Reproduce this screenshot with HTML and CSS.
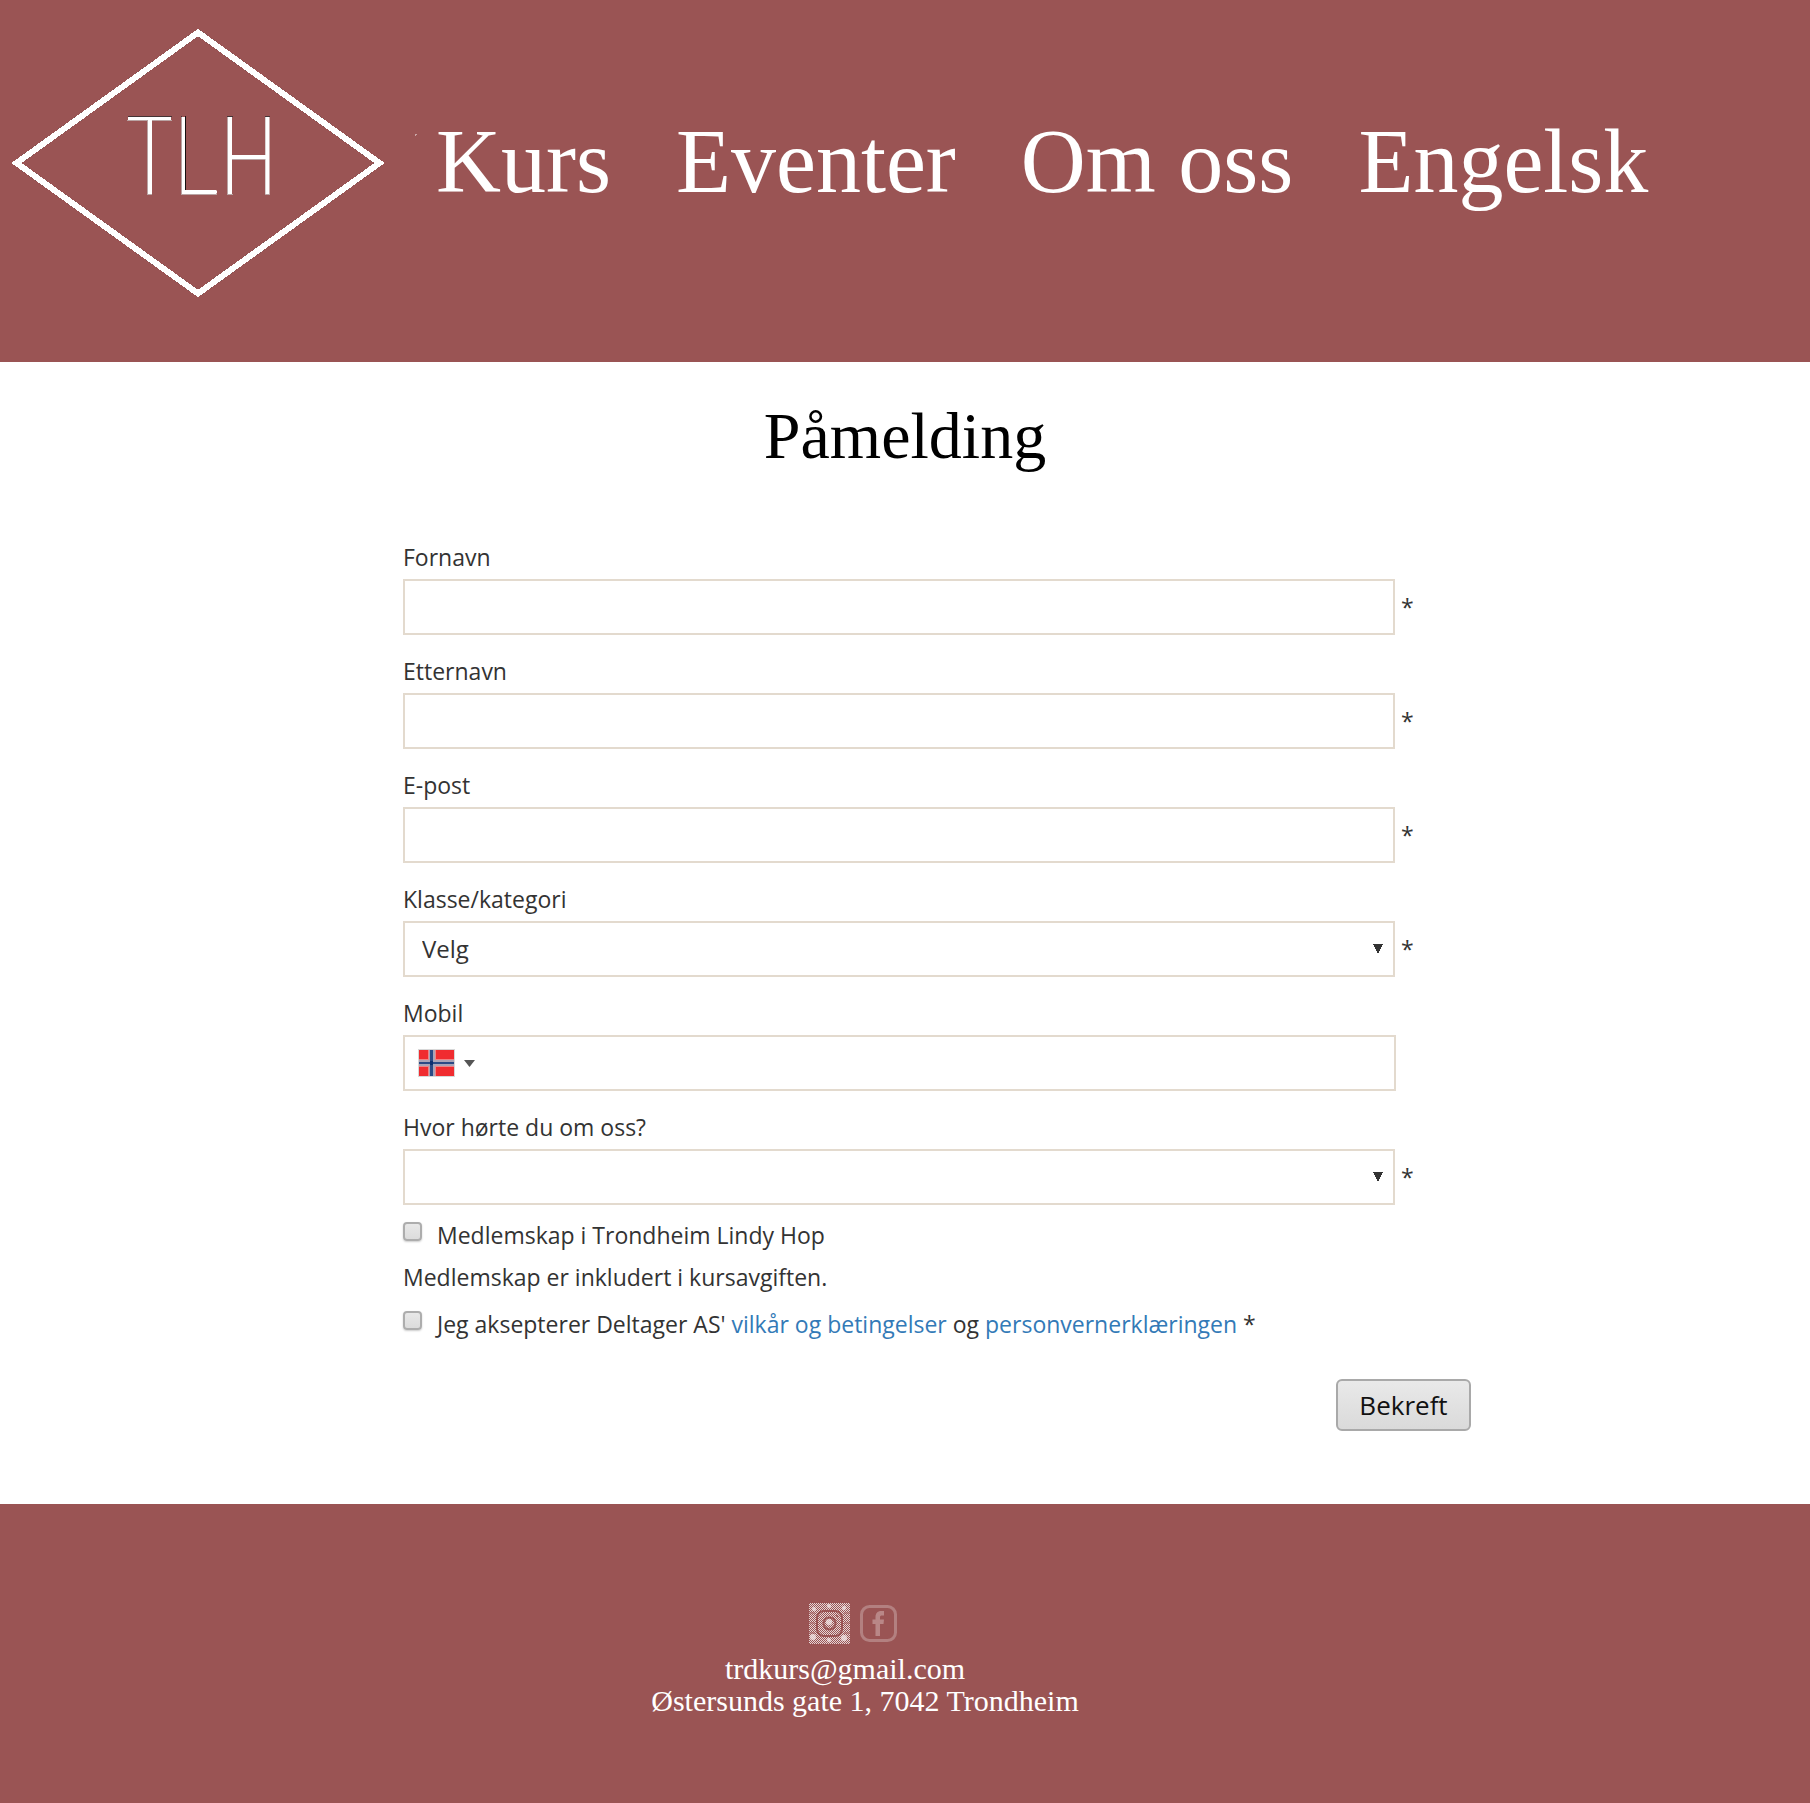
FILE: index.html
```html
<!DOCTYPE html>
<html lang="no">
<head>
<meta charset="utf-8">
<meta name="viewport" content="width=device-width, initial-scale=1">
<title>Påmelding</title>
<link rel="stylesheet" href="styles.css">
</head>
<body>
<header class="site-header">
  <a class="logo" href="#" aria-label="TLH">
    <svg width="420" height="300" viewBox="0 0 420 300" fill="none" aria-hidden="true">
      <g shape-rendering="crispEdges">
        <path d="M198 32.500 379.500 163 198 293.500 16.500 163Z" stroke="#7a5555" stroke-width="7" stroke-dasharray="1 3"/>
        <path d="M198 32.500 379.500 163 198 293.500 16.500 163Z" stroke="#fff" stroke-width="6"/>
      </g>
      <path d="M128 116.500H172M181.500 116V190M227 116.500H233M265 116.500H270" stroke="#443436"/>
      <path d="M185.500 116V190" stroke="#151010"/>
      <path d="M127 120.500H172M147.500 120V195M181.500 117V195M181 194.500H217M227.500 117V195M232 159.500H265M265.500 117V195M147 194.500H152M227 194.500H233M265 194.500H270" stroke="#b9a3a3"/>
      <path d="M128 118.500H171M183.500 117V194M183 192H217" stroke="#fff" stroke-width="3"/>
      <path d="M150 119V194M230 117V194M267.500 117V194M230 157H267M182 192H216" stroke="#fff" stroke-width="4"/>
      <path d="M415 134h2v1h-1v1h-1z" fill="#c9a5a5"/>
    </svg>
  </a>
  <nav class="main-nav">
    <a href="#">Kurs</a>
    <a href="#">Eventer</a>
    <a href="#">Om oss</a>
    <a href="#">Engelsk</a>
  </nav>
</header>

<main class="content">
  <h1 class="title">Påmelding</h1>
  <form class="signup">
    <div class="field">
      <label for="fornavn">Fornavn</label>
      <div class="row"><input class="control" id="fornavn" type="text"><span>*</span></div>
    </div>
    <div class="field">
      <label for="etternavn">Etternavn</label>
      <div class="row"><input class="control" id="etternavn" type="text"><span>*</span></div>
    </div>
    <div class="field">
      <label for="epost">E-post</label>
      <div class="row"><input class="control" id="epost" type="email"><span>*</span></div>
    </div>
    <div class="field">
      <label for="klasse">Klasse/kategori</label>
      <div class="row"><select class="control" id="klasse"><option>Velg</option></select><span>*</span></div>
    </div>
    <div class="field">
      <label for="mobil">Mobil</label>
      <div class="row">
        <div class="control phone">
          <button class="country" type="button" aria-label="Norge">
            <svg width="37" height="28" viewBox="0 0 37 28" aria-hidden="true">
              <path d="M0 0H37V28H0Z" fill="#d8d8d8"/>
              <path d="M1 1H36V27H1Z" fill="#f02c30"/>
              <path d="M10 1H18V27H10ZM1 10H36V18H1Z" fill="#ef8385"/>
              <path d="M11 1H17V27H11ZM1 11H36V17H1Z" fill="#a9a4b8"/>
              <path d="M12 1H15V27H12ZM1 13H36V15H1Z" fill="#2b4a85"/>
              <path d="M12 12H15V16H12Z" fill="#0c2f70"/>
            </svg>
            <svg width="11" height="7" viewBox="0 0 11 7" aria-hidden="true"><path d="M0 0H11L5.500 7Z" fill="#555"/></svg>
          </button>
          <input class="phone-input" id="mobil" type="tel">
        </div>
      </div>
    </div>
    <div class="field">
      <label for="kilde">Hvor hørte du om oss?</label>
      <div class="row"><select class="control" id="kilde"><option></option></select><span>*</span></div>
    </div>
    <div class="check first">
      <input type="checkbox" id="medlem">
      <label for="medlem">Medlemskap i Trondheim Lindy Hop</label>
    </div>
    <p class="note">Medlemskap er inkludert i kursavgiften.</p>
    <div class="check">
      <input type="checkbox" id="vilkar">
      <label for="vilkar">Jeg aksepterer Deltager AS' <a href="#">vilkår og betingelser</a> og <a href="#">personvernerklæringen</a> *</label>
    </div>
    <button class="submit" type="submit">Bekreft</button>
  </form>
</main>

<footer class="site-footer">
  <div class="social">
    <a href="#" aria-label="Instagram">
      <svg width="41" height="41" viewBox="0 0 41 41" fill="none" aria-hidden="true">
        <defs>
          <pattern id="grain" width="2" height="2" patternUnits="userSpaceOnUse">
            <path d="M0 0H1V1H0ZM1 1H2V2H1Z" fill="#9a5454"/>
          </pattern>
        </defs>
        <path d="M0 0H41V41H0Z" fill="#e6d6d6"/>
        <path d="M0 0H41V41H0Z" fill="url(#grain)"/>
        <g fill="#f4eaea" fill-opacity=".7"><circle cx="20" cy="3" r="2"/><circle cx="5" cy="6" r="2"/><circle cx="35" cy="5" r="2"/><circle cx="4" cy="34" r="3"/><circle cx="20" cy="37" r="2"/><circle cx="35" cy="35" r="3"/><circle cx="20" cy="19" r="3"/></g>
        <rect x="8" y="8" width="25" height="25" rx="7" stroke="#9a5454" stroke-width="2"/>
        <circle cx="20.500" cy="20.500" r="6" stroke="#9a5454" stroke-width="2"/>
        <circle cx="28" cy="13" r="1" fill="#9a5454"/>
        <path d="M0 10H6M0 20H6M0 30H6M35 10H41M35 20H41M35 30H41" stroke="#a86666"/>
      </svg>
    </a>
    <a href="#" aria-label="Facebook">
      <svg width="37" height="37" viewBox="0 0 37 37" fill="none" aria-hidden="true">
        <rect x="1.500" y="1.500" width="34" height="34" rx="8" stroke="#b38080" stroke-width="3"/>
        <path d="M15.500 31V19H12.500V14.500H15.500V12C15.500 8 18 6 21 6H24V10.500H22C20.500 10.500 20 11 20 12.500V14.500H24L23.500 19H20V31Z" fill="#b98787"/>
      </svg>
    </a>
  </div>
  <a class="email" href="mailto:trdkurs@gmail.com">trdkurs@gmail.com</a>
  <address class="address">Østersunds gate 1, 7042 Trondheim</address>
</footer>
</body>
</html>
```
FILE: styles.css
```css
* { box-sizing: border-box; }

body {
  margin: 0;
  background: #fff;
  color: #333;
  font-family: "Open Sans", "Noto Sans", sans-serif;
  font-size: 23px;
  line-height: 32px;
}

.site-header {
  display: flex;
  align-items: flex-start;
  min-height: 362px;
  background: #9a5454;
}

.logo { flex: none; }
.logo svg { display: block; }

.main-nav {
  display: flex;
  gap: 65px;
  padding: 112px 0 0 16px;
  font: 400 90px/100px "Liberation Serif", serif;
  white-space: nowrap;
}

.main-nav a { color: #fff; text-decoration: none; }

.content { padding: 34px 0 73px; }

.title {
  margin: 0 0 65px;
  color: #000;
  font: 400 66px/80px "Liberation Serif", serif;
  text-align: center;
}

.signup {
  display: flex;
  flex-direction: column;
  padding: 0 339px 0 403px;
}

.field { margin-bottom: 20px; }
.field label { display: block; margin-bottom: 6px; }

.row { display: flex; align-items: center; gap: 6px; padding-right: 58px; }
.row .control:last-child { margin-right: 17px; }

.control {
  flex: 1;
  min-width: 0;
  height: 56px;
  padding: 0 17px;
  border: 2px solid #e3dace;
  border-radius: 0;
  background-color: #fff;
  color: #333;
  font: inherit;
  font-size: 24px;
}

.row span { flex: none; width: 12px; }

select.control {
  appearance: none;
  background-image: linear-gradient(to top right, transparent 50%, #333 51%), linear-gradient(to top left, transparent 50%, #333 51%);
  background-position: right 15px top 21px, right 10px top 21px;
  background-size: 5px 10px;
  background-repeat: no-repeat;
}

.phone { display: flex; align-items: center; padding: 0 13px; }

.country {
  display: flex;
  align-items: center;
  gap: 9px;
  padding: 0;
  border: 0;
  background: none;
}

.phone-input {
  flex: 1;
  min-width: 0;
  height: 48px;
  margin-left: 12px;
  border: 0;
  background: none;
  font: inherit;
}

.check { display: flex; align-items: flex-start; gap: 15px; }
.check.first { margin-top: -6px; }

.check input {
  appearance: none;
  flex: none;
  width: 19px;
  height: 19px;
  margin: 3px 0 0;
  border: 2px solid #adadad;
  border-radius: 4px;
  background: linear-gradient(#e8e8e8, #dcdcdc);
  box-shadow: 0 1px 2px #ccc;
}

.check a { color: #337ab7; text-decoration: none; }

.note { margin: 10px 0 15px; }

.submit {
  align-self: flex-end;
  width: 135px;
  height: 52px;
  margin-top: 39px;
  padding: 0;
  border: 2px solid #a9a9a9;
  border-radius: 6px;
  background: linear-gradient(#e9e9e9, #dadada);
  color: #111;
  font: inherit;
  font-size: 26px;
}

.site-footer {
  display: flex;
  flex-direction: column;
  align-items: center;
  min-height: 299px;
  padding: 99px 80px 80px 0;
  background: #9a5454;
  color: #fff;
  font: 400 30px/32px "Liberation Serif", serif;
}

.social { display: flex; align-items: center; gap: 10px; padding-right: 24px; margin-bottom: 9px; }
.social svg { display: block; }

.email { padding-right: 40px; color: #fff; text-decoration: none; }
.address { font-style: normal; }
```
